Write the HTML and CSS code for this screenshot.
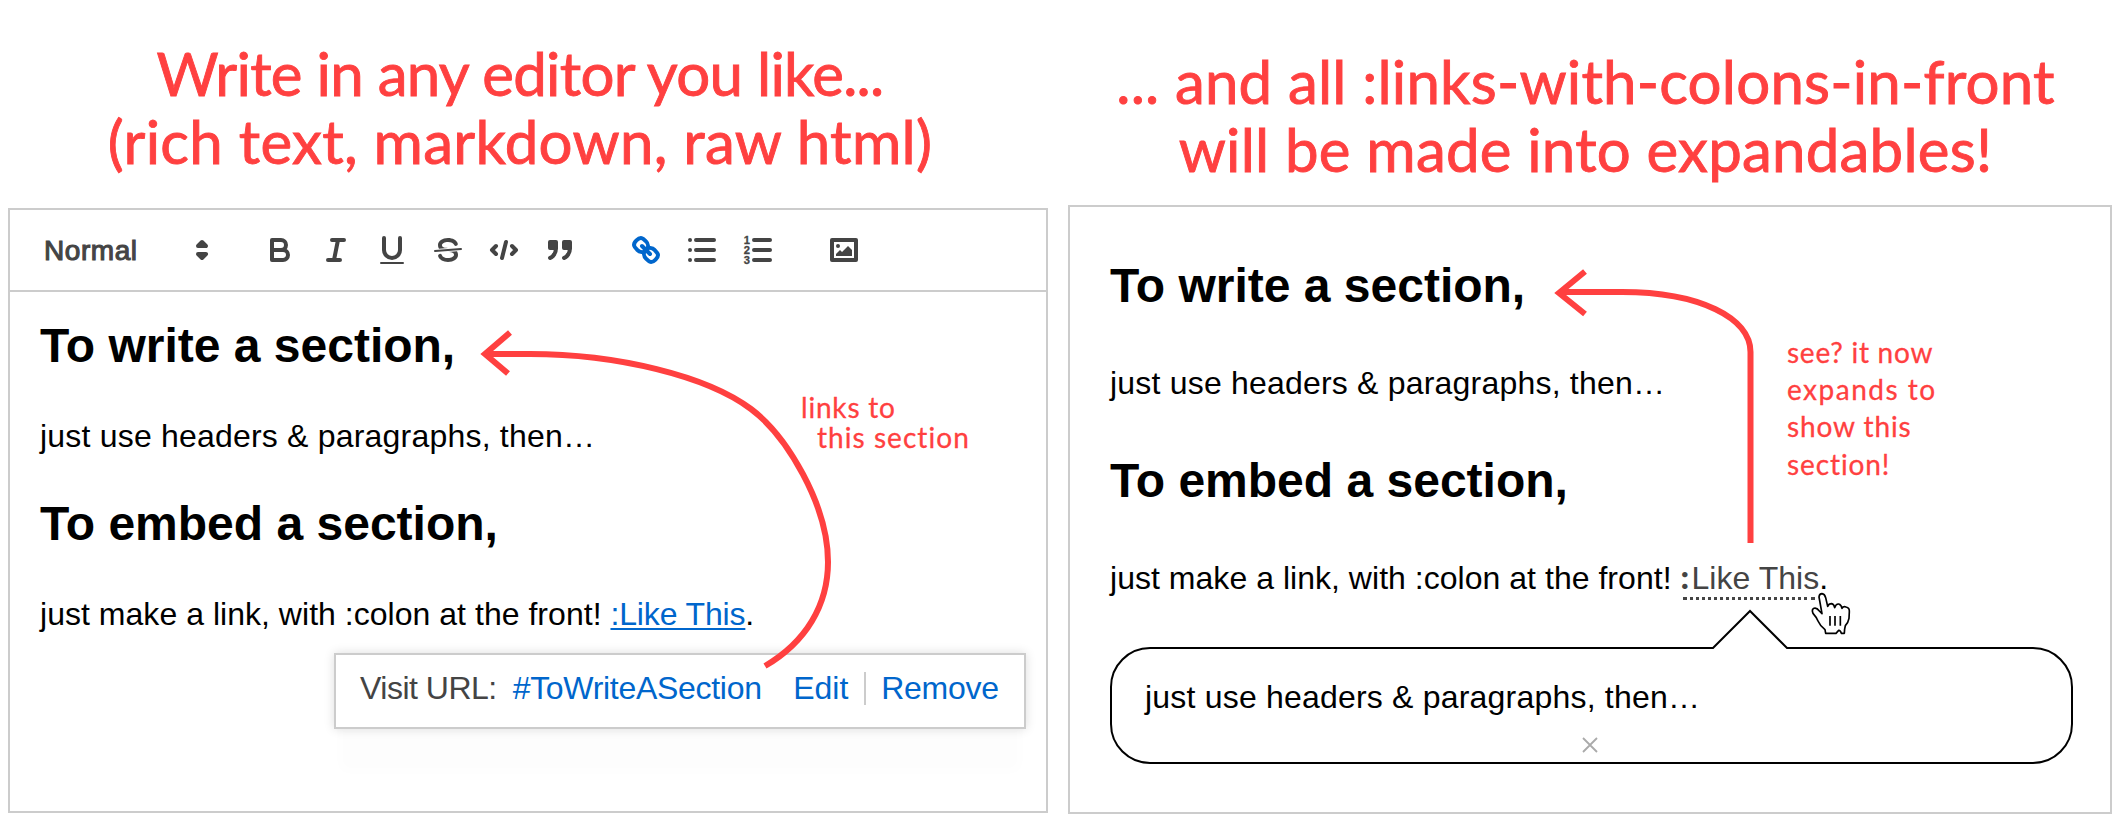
FILE: index.html
```html
<!DOCTYPE html>
<html lang="en">
<head>
<meta charset="utf-8">
<title>Write in any editor you like</title>
<link rel="stylesheet" href="styles.css">
</head>
<body>
<main class="board">
  <section class="side side-left">
    <h1 class="headline">
      <span class="line w-a">Write in any editor you like...</span>
      <span class="line w-b">(rich text, markdown, raw html)</span>
    </h1>
    <div class="panel editor">
      <div class="toolbar">
        <div class="picker">
          <span class="picker-label">Normal</span>
          <svg class="icon" viewBox="0 0 18 18"><polygon class="s f" points="7 11 9 13 11 11 7 11"/><polygon class="s f" points="7 7 9 5 11 7 7 7"/></svg>
        </div>
        <div class="group">
          <svg class="icon" viewBox="0 0 18 18"><path class="s" d="M5,4H9.5A2.5,2.5,0,0,1,12,6.5v0A2.5,2.5,0,0,1,9.5,9H5Z"/><path class="s" d="M5,9h5.5A2.5,2.5,0,0,1,13,11.5v0A2.5,2.5,0,0,1,10.5,14H5Z"/></svg>
          <svg class="icon" viewBox="0 0 18 18"><path class="s" d="M7,4H13M5,14H11M8,14L10,4"/></svg>
          <svg class="icon" viewBox="0 0 18 18"><path class="s" d="M5,3V9a4,4,0,0,0,8,0V3"/><rect class="f" x="3" y="15" width="12" height="1" rx=".5"/></svg>
          <svg class="icon" viewBox="0 0 18 18"><path class="s thin" d="M15.5,8.5L2.5,9.5"/><path class="f" d="M9.007,8C6.542,7.791,6,7.519,6,6.5,6,5.792,7.283,5,9,5c1.571,0,2.765.679,2.969,1.309a1,1,0,0,0,1.9-.617C13.356,4.106,11.354,3,9,3,6.2,3,4,4.538,4,6.5a3.2,3.2,0,0,0,.5,1.843Z"/><path class="f" d="M8.984,10C11.457,10.208,12,10.479,12,11.5c0,.708-1.283,1.5-3,1.5-1.571,0-2.765-.679-2.969-1.309a1,1,0,1,0-1.9.617C4.644,13.894,6.646,15,9,15c2.8,0,5-1.538,5-3.5a3.2,3.2,0,0,0-.5-1.843Z"/></svg>
          <svg class="icon" viewBox="0 0 18 18"><path class="s" d="M5,7L3,9L5,11M13,7L15,9L13,11"/><path class="s" d="M10,5L8,13"/></svg>
          <svg class="icon" viewBox="0 0 18 18"><rect class="s f" x="4" y="5" width="3" height="3"/><rect class="s f" x="11" y="5" width="3" height="3"/><path class="s f" d="M7,8c0,4.031-3,5-3,5"/><path class="s f" d="M14,8c0,4.031-3,5-3,5"/></svg>
        </div>
        <div class="group">
          <svg class="icon active" viewBox="0 0 18 18"><path class="s" d="M7,7L11,11"/><path class="s" d="M8.9,4.577a3.476,3.476,0,0,1,.36,4.679A3.476,3.476,0,0,1,4.577,8.9C3.185,7.5,2.035,6.4,4.217,4.217S7.5,3.185,8.9,4.577Z"/><path class="s" d="M13.423,9.1a3.476,3.476,0,0,0-4.679-.36,3.476,3.476,0,0,0,.36,4.679c1.392,1.392,2.5,2.542,4.679.36S14.815,10.5,13.423,9.1Z"/></svg>
          <svg class="icon" viewBox="0 0 18 18"><path class="s" d="M6,4H15M6,9H15M6,14H15M3,4h.01M3,9h.01M3,14h.01"/></svg>
          <svg class="icon" viewBox="0 0 18 18"><path class="s" d="M7,4H15M7,9H15M7,14H15"/><text class="digit" x="1.9" y="5.9">1</text><text class="digit" x="1.9" y="10.9">2</text><text class="digit" x="1.9" y="15.9">3</text></svg>
        </div>
        <div class="group">
          <svg class="icon" viewBox="0 0 18 18"><rect class="s" x="3" y="4" width="12" height="10"/><circle class="f" cx="6" cy="7" r="1"/><polyline class="f" points="5 12 5 11 7 9 8 10 11 7 13 9 13 12 5 12"/></svg>
        </div>
      </div>
      <div class="prose">
        <h2>To write a section,</h2>
        <p>just use headers &amp; paragraphs, then…</p>
        <h2>To embed a section,</h2>
        <p class="make">just make a link, with :colon at the front! <a class="link">:Like This</a>.</p>
      </div>
      <div class="tooltip">
        <span class="visit">Visit URL:</span>
        <a class="url">#ToWriteASection</a>
        <a class="edit">Edit</a>
        <a class="remove">Remove</a>
      </div>
    </div>
  </section>

  <section class="side side-right">
    <h1 class="headline">
      <span class="line w-c">... and all :links-with-colons-in-front</span>
      <span class="line w-d">will be made into expandables!</span>
    </h1>
    <div class="panel result">
      <h2>To write a section,</h2>
      <p>just use headers &amp; paragraphs, then…</p>
      <h2>To embed a section,</h2>
      <p class="make">just make a link, with :colon at the front! <span class="expand"><b class="colon">:</b>Like This</span>.</p>
      <div class="bubble">
        <svg class="beak" viewBox="0 0 78 42"><path d="M1.5,39.5L39,3L76.5,39.5V42H1.5Z" fill="#fff"/><path d="M0,40H2L39,3L76,40H78" fill="none" stroke="#000" stroke-width="2"/></svg>
        <p>just use headers &amp; paragraphs, then…</p>
        <svg class="close" viewBox="0 0 16 16"><path d="M1,1L15,15M15,1L1,15"/></svg>
      </div>
    </div>
  </section>

  <div class="note note-left">
    <span class="line n-a">links to</span>
    <span class="line n-b">this section</span>
  </div>
  <div class="note note-right">
    <span class="line n-c">see? it now</span>
    <span class="line n-d">expands to</span>
    <span class="line n-e">show this</span>
    <span class="line n-e">section!</span>
  </div>
  <svg class="arrows" viewBox="0 0 2120 830">
    <path d="M485,354H530C617,354 707,376 751,409C787,436 828,505 828,562C828,605 806,642 765,666"/>
    <path d="M510,332.500L485,354L508,373.500"/>
    <path d="M1559,292H1622C1700,292 1750.500,318 1750.500,352V543"/>
    <path d="M1585,271.500L1559,293L1585,314"/>
  </svg>
  <svg class="cursor" viewBox="0 0 180 180">
    <path d="M57,36Q58,26 66,26Q74,27 77,38L83,64Q86,56 95,56Q102,57 104,68Q108,56 116,57Q124,59 126,70Q130,63 138,66Q149,68 148,80L147,100Q145,112 136,122Q133,132 133,145L124,145Q121,135 116,136L108,145H77L75,134Q60,122 54,108Q49,96 39,85Q34,74 42,70Q50,67 58,78L66,86Z"/>
    <path d="M90,93V122M105,93V122M121,93V122"/>
  </svg>
</main>
</body>
</html>
```
FILE: styles.css
```css
* { box-sizing: border-box; }
body {
  margin: 0;
  background: #fff;
  color: #000;
  font-family: "Liberation Sans", Arial, sans-serif;
}
h1, h2, p { margin: 0; font-weight: normal; }
.board {
  position: relative;
  width: 2120px;
  height: 830px;
  padding: 0 8px;
  display: grid;
  grid-template-columns: 1040px 1044px;
  justify-content: space-between;
  overflow: hidden;
}
.side { display: flex; flex-direction: column; }
.side-left { padding-top: 39px; }
.side-right { padding-top: 47px; }

.headline, .note {
  font-family: Lato, sans-serif;
  font-variant-ligatures: none;
  color: #ff4040;
}
.line { display: block; white-space: pre; }
.headline {
  font-size: 60px;
  line-height: 68px;
  text-align: center;
  -webkit-text-stroke: .9px #ff4040;
}
.side-left .headline { padding-right: 16px; margin-bottom: 33px; }
.side-right .headline { padding-right: 9px; margin-bottom: 21.5px; }
.w-a { letter-spacing: -.7px; }
.w-b { letter-spacing: .3px; }
.w-c { letter-spacing: .2px; }
.w-d { letter-spacing: .22px; }

.panel {
  position: relative;
  border: 2px solid #ccc;
}
.editor { height: 605px; }
.result {
  height: 609px;
  padding: 51px 37px 0 40px;
  display: flex;
  flex-direction: column;
  gap: 51.5px;
}

.toolbar {
  height: 82px;
  border-bottom: 2px solid #ccc;
  padding-left: 34px;
  display: flex;
  align-items: center;
  gap: 50px;
  color: #444;
}
.picker {
  width: 176px;
  margin-right: -8px;
  display: flex;
  align-items: center;
  justify-content: space-between;
}
.picker-label {
  font-size: 28px;
  line-height: 32px;
  padding-top: 2px;
  letter-spacing: .55px;
  -webkit-text-stroke: 1.1px #444;
}
.group { display: flex; gap: 20px; }
.icon { display: block; width: 36px; height: 36px; color: #444; }
.icon.active { color: #06c; }
.s {
  fill: none;
  stroke: currentColor;
  stroke-width: 2;
  stroke-linecap: round;
  stroke-linejoin: round;
}
.thin { stroke-width: 1; }
.f { fill: currentColor; }
.digit {
  font: bold 5.6px "Liberation Sans", sans-serif;
  fill: currentColor;
  stroke: currentColor;
  stroke-width: .15;
}

h2 { font-size: 48px; line-height: 56px; font-weight: bold; white-space: nowrap; }
p { font-size: 32px; line-height: 36px; letter-spacing: .2px; white-space: nowrap; }
.make { letter-spacing: .03px; }
.prose { padding: 26px 30px 0; display: flex; flex-direction: column; }
.prose h2 { margin-bottom: 44px; }
.prose p { margin-bottom: 41.5px; }
.link {
  color: #06c;
  letter-spacing: -.15px;
  text-decoration: underline;
  text-decoration-thickness: 2px;
  text-underline-offset: 3px;
  text-decoration-skip-ink: none;
}

.tooltip {
  position: absolute;
  left: 324px;
  top: 443px;
  width: 692px;
  height: 76px;
  padding: 0 0 6px 24px;
  border: 2px solid #ccc;
  background: #fff;
  box-shadow: 0 0 10px #ddd, 0 48px 12px -6px #fdfdfd;
  display: flex;
  align-items: center;
  font-size: 32px;
  line-height: 36px;
  white-space: nowrap;
  color: #06c;
}
.visit { color: #444; letter-spacing: -.5px; margin-right: 16px; }
.url { letter-spacing: -.3px; margin-right: 31.5px; }
.edit { padding-right: 16px; border-right: 2px solid #ccc; line-height: 33px; }
.remove { padding-left: 15px; letter-spacing: -.3px; }

.expand { position: relative; color: #444; }
.expand::after {
  content: "";
  position: absolute;
  left: 3px;
  right: 4px;
  bottom: -4px;
  border-bottom: 3px dotted #444;
}
.colon {
  display: inline-block;
  width: 11px;
  font: 900 33px/20px Lato, sans-serif;
}
.bubble {
  position: relative;
  height: 117px;
  margin-top: -.5px;
  padding: 30px 0 0 33px;
  border: 2px solid #000;
  border-radius: 40px;
}
.beak { position: absolute; left: 599px; top: -41px; width: 78px; height: 42px; }
.close {
  position: absolute;
  left: 470px;
  bottom: 9px;
  width: 16px;
  height: 16px;
  fill: none;
  stroke: #aaa;
  stroke-width: 1.8;
}

.note { position: absolute; font-size: 28px; -webkit-text-stroke: .3px #ff4040; }
.note-left { left: 801px; top: 392px; line-height: 30px; }
.note-right { left: 1787px; top: 333.5px; line-height: 37.4px; }
.n-a { letter-spacing: .8px; }
.n-b { letter-spacing: 1.05px; padding-left: 16px; }
.n-c { letter-spacing: .75px; }
.n-d { letter-spacing: 1.5px; }
.n-e { letter-spacing: .9px; }

.arrows, .cursor { position: absolute; fill: none; stroke-linecap: butt; }
.arrows { left: 0; top: 0; width: 2120px; height: 830px; stroke: #ff4040; stroke-width: 6; }
.cursor { left: 1800px; top: 585px; width: 60px; height: 60px; stroke: #000; stroke-width: 5; stroke-linejoin: round; }
.cursor path:first-child { fill: #fff; }
```
